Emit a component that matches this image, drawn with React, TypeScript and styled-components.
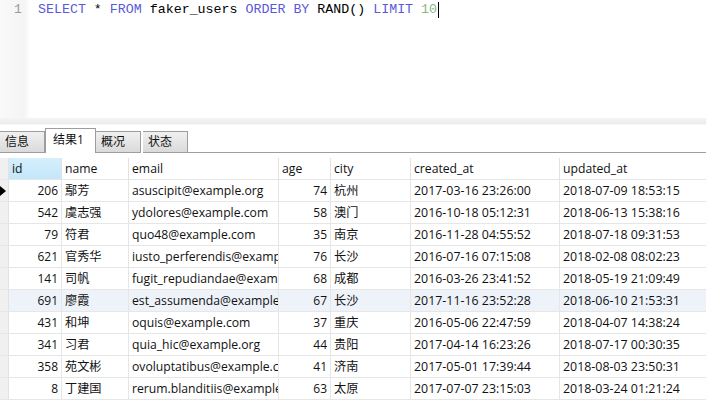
import React from 'react';
import styled, {createGlobalStyle} from "styled-components";

const GlobalStyle = createGlobalStyle`
    html, body {
        margin: 0;
        padding: 0;
        background: #ffffff;
        overflow: hidden;
    }
    body {
        font-family: "Open Sans", "Noto Sans", "Noto Sans CJK SC", sans-serif;
        color: #000000;
    }
`;

type RowType = {
    id: number
    name: string
    email: string
    age: number
    city: string
    created: string
    updated: string
}

const rows: RowType[] = [
    {id: 206, name: "鄢芳", email: "asuscipit@example.org", age: 74, city: "杭州", created: "2017-03-16 23:26:00", updated: "2018-07-09 18:53:15"},
    {id: 542, name: "虞志强", email: "ydolores@example.com", age: 58, city: "澳门", created: "2016-10-18 05:12:31", updated: "2018-06-13 15:38:16"},
    {id: 79, name: "符君", email: "quo48@example.com", age: 35, city: "南京", created: "2016-11-28 04:55:52", updated: "2018-07-18 09:31:53"},
    {id: 621, name: "官秀华", email: "iusto_perferendis@example.net", age: 76, city: "长沙", created: "2016-07-16 07:15:08", updated: "2018-02-08 08:02:23"},
    {id: 141, name: "司帆", email: "fugit_repudiandae@example.com", age: 68, city: "成都", created: "2016-03-26 23:41:52", updated: "2018-05-19 21:09:49"},
    {id: 691, name: "廖霞", email: "est_assumenda@example.org", age: 67, city: "长沙", created: "2017-11-16 23:52:28", updated: "2018-06-10 21:53:31"},
    {id: 431, name: "和坤", email: "oquis@example.com", age: 37, city: "重庆", created: "2016-05-06 22:47:59", updated: "2018-04-07 14:38:24"},
    {id: 341, name: "习君", email: "quia_hic@example.org", age: 44, city: "贵阳", created: "2017-04-14 16:23:26", updated: "2018-07-17 00:30:35"},
    {id: 358, name: "苑文彬", email: "ovoluptatibus@example.com", age: 41, city: "济南", created: "2017-05-01 17:39:44", updated: "2018-08-03 23:50:31"},
    {id: 8, name: "丁建国", email: "rerum.blanditiis@example.net", age: 63, city: "太原", created: "2017-07-07 23:15:03", updated: "2018-03-24 01:21:24"},
];

// widths read off the reference grid
const columns = [
    {key: "id", width: 53, right: true, size: 12},
    {key: "name", width: 67, size: 12.2},
    {key: "email", width: 150, size: 12.2},
    {key: "age", width: 52, right: true, size: 12},
    {key: "city", width: 80, size: 12.2},
    {key: "created_at", width: 149, size: 12.4},
    {key: "updated_at", width: 160, size: 12.4},
];

const tabs = ["信息", "结果1", "概况", "状态"];

export default function App() {
    return (
        <Page>
            <GlobalStyle/>
            <Editor>
                <Gutter>1</Gutter>
                <Code>
                    <Kw>SELECT</Kw> * <Kw>FROM</Kw> faker_users <Kw>ORDER BY</Kw> RAND() <Kw>LIMIT</Kw> <Num>10</Num>
                    <Caret/>
                </Code>
            </Editor>
            <Splitter/>
            <TabBar>
                {tabs.map((t, i) => (
                    <Tab key={t} active={i === 1} gap={i === 3}>{t}</Tab>
                ))}
                <TabFill/>
            </TabBar>
            <Grid>
                <Row>
                    <Indicator/>
                    {columns.map((c, i) => (
                        <HeadCell key={c.key} w={c.width} active={i === 0}>{c.key}</HeadCell>
                    ))}
                </Row>
                {rows.map((r, i) => {
                    const values = [r.id, r.name, r.email, r.age, r.city, r.created, r.updated];
                    return (
                        <Row key={r.id} hl={i === 5}>
                            <Indicator>{i === 0 && <Arrow/>}</Indicator>
                            {columns.map((c, j) => (
                                <Cell key={c.key} w={c.width} right={c.right} size={c.size}>{values[j]}</Cell>
                            ))}
                        </Row>
                    );
                })}
            </Grid>
        </Page>
    );
}

const Page = styled.div`
    width: 706px;
    height: 402px;
    overflow: hidden;
    display: flex;
    flex-direction: column;
`;

const Editor = styled.div`
    height: 118px;
    display: flex;
    background: #ffffff;
`;

const Gutter = styled.div`
    width: 30px;
    padding: 2px 0 0 14px;
    box-sizing: border-box;
    background: linear-gradient(to right, #fafafa, #f4f4f4 80%, #ffffff);
    font-family: "Liberation Mono", monospace;
    font-size: 13px;
    line-height: 16px;
    color: #9a9a9a;
`;

const Code = styled.div`
    padding: 2px 0 0 8px;
    font-family: "Liberation Mono", monospace;
    font-size: 13.3px;
    line-height: 16px;
    color: #000000;
    white-space: pre;
`;

const Kw = styled.span`
    color: #5a5ad8;
`;

const Num = styled.span`
    color: #86b886;
`;

const Caret = styled.span`
    display: inline-block;
    width: 1px;
    height: 16px;
    margin-left: 1px;
    vertical-align: top;
    background: #000000;
`;

const Splitter = styled.div`
    height: 6px;
    background: linear-gradient(#f4f4f4, #ececec);
    border-bottom: 1px solid #f6f6f6;
`;

const TabBar = styled.div`
    height: 28px;
    display: flex;
    align-items: flex-end;
    background: #ffffff;
`;

const Tab = styled.div<{ active?: boolean; gap?: boolean }>`
    box-sizing: border-box;
    height: ${p => p.active ? "25px" : "22px"};
    width: ${p => p.active ? "51px" : "45px"};
    margin-left: ${p => p.gap ? "2px" : "0"};
    padding: ${p => p.active ? "3px 0 0 7px" : "2px 0 0 5px"};
    font-size: 12px;
    line-height: 16px;
    color: #111111;
    border: 1px solid #9d9d9d;
    border-bottom: ${p => p.active ? "none" : "1px solid #9d9d9d"};
    border-left: ${p => p.active ? "1px solid #9d9d9d" : "none"};
    background: ${p => p.active ? "#ffffff" : "linear-gradient(#f0f0f0, #dadada)"};
`;

const TabFill = styled.div`
    flex: 1;
    height: 1px;
    background: #9d9d9d;
`;

const Grid = styled.div`
    padding-top: 5px;
    display: flex;
    flex-direction: column;
`;

const Row = styled.div<{ hl?: boolean }>`
    display: flex;
    height: 22px;
    flex-shrink: 0;
    background: ${p => p.hl ? "#eef3fa" : "#ffffff"};
    border-bottom: 1px solid #e6e6e6;
    box-sizing: border-box;
`;

const Indicator = styled.div`
    width: 8px;
    flex-shrink: 0;
    background: #f0f0f0;
    border-right: 1px solid #e2e2e2;
    display: flex;
    align-items: center;
`;

const Arrow = styled.div`
    width: 0;
    height: 0;
    border-top: 5px solid transparent;
    border-bottom: 5px solid transparent;
    border-left: 6px solid #000000;
`;

const HeadCell = styled.div<{ w: number; active?: boolean }>`
    width: ${p => p.w}px;
    flex-shrink: 0;
    box-sizing: border-box;
    padding: 2px 0 0 3px;
    font-size: 12.2px;
    line-height: 17px;
    color: #111111;
    border-right: 1px solid #e2e2e2;
    background: ${p => p.active ? "linear-gradient(#d5effc, #c4e6fa)" : "#ffffff"};
`;

const Cell = styled.div<{ w: number; right?: boolean; size: number }>`
    width: ${p => p.w}px;
    flex-shrink: 0;
    box-sizing: border-box;
    padding: 2px 3px 0 3px;
    overflow: hidden;
    white-space: nowrap;
    text-align: ${p => p.right ? "right" : "left"};
    font-size: ${p => p.size}px;
    line-height: 17px;
    color: #111111;
    border-right: 1px solid #e6e6e6;
`;
